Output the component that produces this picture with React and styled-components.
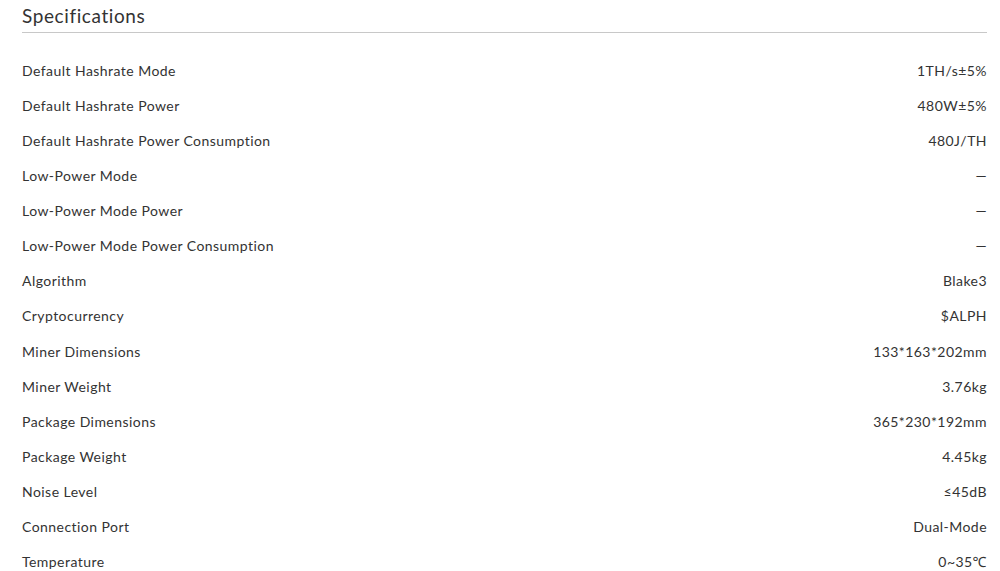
import React from 'react';
import styled, { createGlobalStyle } from 'styled-components';

const GlobalStyle = createGlobalStyle`
    body {
        margin: 0;
        background: #fff;
        font-family: Lato, "Noto Sans", sans-serif;
        color: #333;
    }
`;

const Container = styled.div`
    padding: 4px 13px 0 22px;
`;

const Title = styled.h2`
    margin: 0;
    font-size: 19px;
    font-weight: 400;
    line-height: 24px;
    letter-spacing: 0.6px;
    color: #333;
    padding-bottom: 4px;
    border-bottom: 1px solid #c8c8c8;
`;

const List = styled.div`
    padding-top: 20px;
`;

const Row = styled.div`
    display: flex;
    justify-content: space-between;
    align-items: center;
    height: 35.07px;
    font-size: 14px;
    letter-spacing: 0.45px;
    color: #333;
`;

const Value = styled.span`
    text-align: right;
`;

const specs = [
    ['Default Hashrate Mode', '1TH/s±5%'],
    ['Default Hashrate Power', '480W±5%'],
    ['Default Hashrate Power Consumption', '480J/TH'],
    ['Low-Power Mode', '—'],
    ['Low-Power Mode Power', '—'],
    ['Low-Power Mode Power Consumption', '—'],
    ['Algorithm', 'Blake3'],
    ['Cryptocurrency', '$ALPH'],
    ['Miner Dimensions', '133*163*202mm'],
    ['Miner Weight', '3.76kg'],
    ['Package Dimensions', '365*230*192mm'],
    ['Package Weight', '4.45kg'],
    ['Noise Level', '≤45dB'],
    ['Connection Port', 'Dual-Mode'],
    ['Temperature', '0~35℃'],
];

const App = () => {
    return (
        <Container>
            <GlobalStyle />
            <Title>Specifications</Title>
            <List>
                {specs.map(([label, value]) => (
                    <Row key={label}>
                        <span>{label}</span>
                        <Value>{value}</Value>
                    </Row>
                ))}
            </List>
        </Container>
    );
};

export default App;
